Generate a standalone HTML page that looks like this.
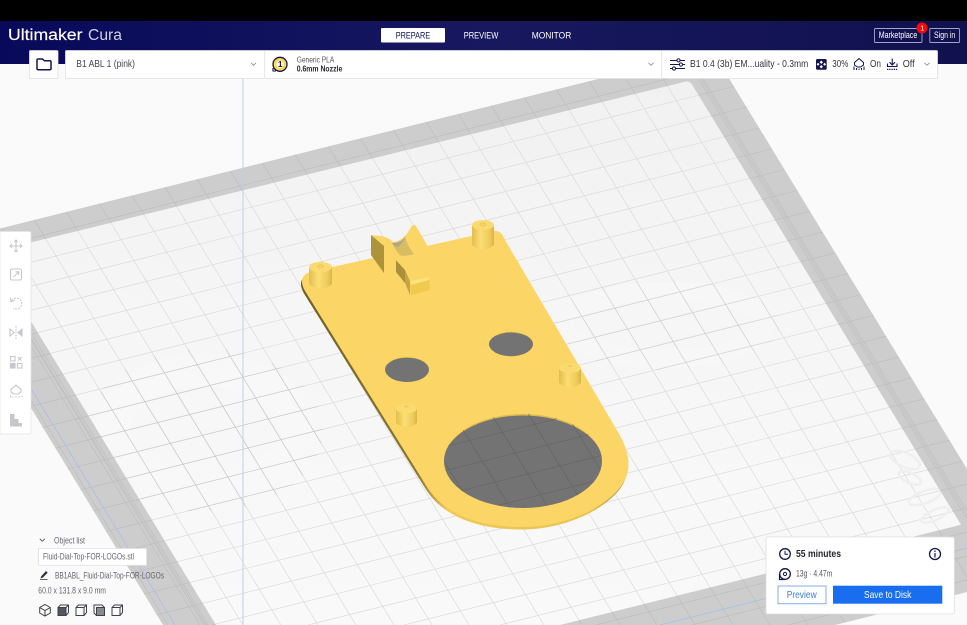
<!DOCTYPE html>
<html lang="en">
<head>
<meta charset="utf-8">
<title>Ultimaker Cura</title>
<style>
html,body{margin:0;padding:0;background:#fafafa;width:967px;height:625px;overflow:hidden}
svg{display:block;filter:blur(.25px)}
text{font-family:"Liberation Sans",sans-serif}
</style>
</head>
<body>
<svg xmlns="http://www.w3.org/2000/svg" width="967" height="625" viewBox="0 0 967 625">
<defs>
<path id="grid" d="M0 246L967 4M0 270L967 28M0 294L967 52M0 318L967 76M0 342L967 100M0 366L967 124M0 390L967 148M0 414L967 172M0 438L967 196M0 462L967 220M0 486L967 244M0 510L967 268M0 534L967 292M0 558L967 316M0 582L967 340M0 606L967 364M20 625L967 388M116 625L967 412M212 625L967 436M308 625L967 460M404 625L967 484M500 625L967 508M596 625L967 532M692 625L967 556M788 625L967 580M0 349L168 625M0 287L206 625M0 226L243 625M0 164L281 625M0 103L318 625M0 41L356 625M13 0L394 625M51 0L432 625M88 0L469 625M126 0L507 625M163 0L544 625M201 0L582 625M239 0L620 625M276 0L657 625M314 0L695 625M352 0L733 625M389 0L770 625M427 0L808 625M465 0L846 625M502 0L883 625M540 0L921 625M578 0L959 625M615 0L967 577M653 0L967 515M691 0L967 452"/>
<clipPath id="outer"><path d="M0 228.500L712 50.500L967 469V592L835 625H163L0 357Z"/></clipPath>
<clipPath id="inner"><path d="M0 250L686 81.500Q690 81 692 84.500L961 524.700L560 625H216L0 270.500Z"/></clipPath>
<clipPath id="ghostL"><ellipse cx="205" cy="430" rx="118" ry="82"/></clipPath>
<clipPath id="ghostR"><ellipse cx="665" cy="325" rx="115" ry="45"/></clipPath>
<clipPath id="holeB"><ellipse cx="523" cy="461" rx="79" ry="47"/></clipPath>
<clipPath id="holeM"><ellipse cx="407" cy="369.500" rx="22" ry="12.500"/></clipPath>
<clipPath id="holeN"><ellipse cx="511" cy="344" rx="22" ry="12.200"/></clipPath>
<linearGradient id="bedfill" x1="0" y1="0" x2="0" y2="1">
<stop offset="0" stop-color="#f1f1f1"/><stop offset=".45" stop-color="#f6f6f6"/><stop offset="1" stop-color="#f9f9f9"/>
</linearGradient>
<linearGradient id="head" x1="0" y1="0" x2="1" y2="0">
<stop offset="0" stop-color="#08095a"/><stop offset=".5" stop-color="#17185f"/><stop offset="1" stop-color="#11114f"/>
</linearGradient>
<linearGradient id="side" x1="300" y1="0" x2="630" y2="0" gradientUnits="userSpaceOnUse">
<stop offset="0" stop-color="#6d5f26"/><stop offset=".36" stop-color="#8b7730"/><stop offset=".45" stop-color="#efca5b"/><stop offset=".88" stop-color="#e8c352"/><stop offset="1" stop-color="#a98f39"/>
</linearGradient>
<linearGradient id="cyl" x1="0" y1="0" x2="1" y2="0">
<stop offset="0" stop-color="#e2be4e"/><stop offset=".4" stop-color="#fbde74"/><stop offset=".8" stop-color="#efcb5a"/><stop offset="1" stop-color="#d8b548"/>
</linearGradient>
</defs>

<!-- viewport -->
<rect width="967" height="625" fill="#fafafa"/>

<!-- build plate -->
<path d="M0 228.500L712 50.500L967 469V592L835 625H163L0 357Z" fill="#cdcdcd"/>
<g clip-path="url(#outer)">
<use href="#grid" fill="none" stroke="#bebebe" stroke-width=".7"/>
<path d="M7 300L204 625M11 300L208 625M3 300L200 625M693 70L967 519M698 70L967 511" fill="none" stroke="#bcbcbc" stroke-width=".6"/>
<path d="M30 387L175 625M660 625L967 548" fill="none" stroke="#a9bfe4" stroke-width=".8"/>
</g>
<path d="M0 250L686 81.500Q690 81 692 84.500L961 524.700L560 625H216L0 270.500Z" fill="url(#bedfill)"/>
<g clip-path="url(#inner)">
<use href="#grid" fill="none" stroke="#dbdbdb" stroke-width=".7"/>
<ellipse cx="205" cy="430" rx="92" ry="60" fill="none" stroke="#f9f9f9" stroke-width="34" opacity=".45"/>
<ellipse cx="665" cy="325" rx="100" ry="34" fill="none" stroke="#f9f9f9" stroke-width="18" opacity=".4"/>
<g clip-path="url(#ghostL)"><use href="#grid" fill="none" stroke="#c8c8c8" stroke-width=".7"/></g>
<g clip-path="url(#ghostR)"><use href="#grid" fill="none" stroke="#d2d2d2" stroke-width=".7"/></g>
<g fill="none" stroke="#efefef" stroke-width="2.500">
<ellipse cx="905" cy="460" rx="16" ry="7" transform="rotate(25 905 460)"/>
<ellipse cx="910" cy="478" rx="12" ry="5" transform="rotate(25 910 478)"/>
<ellipse cx="925" cy="497" rx="17" ry="6" transform="rotate(-20 925 497)"/>
<ellipse cx="935" cy="515" rx="15" ry="5" transform="rotate(-25 935 515)"/>
</g>
</g>
<path d="M243 79V625" stroke="#bcd0ef" stroke-width="1"/>

<!-- model -->
<path transform="translate(-1 2.500)" d="M310 272L494 231Q501 230 505 240L618 432C632 456 632 474 618 490C595 515 555 527 523 527C480 527 445 515 427 487L305 291C300 282 301 275 310 272Z" fill="url(#side)"/>
<path d="M310 272L494 231Q501 230 505 240L618 432C632 456 632 474 618 490C595 515 555 527 523 527C480 527 445 515 427 487L305 291C300 282 301 275 310 272Z" fill="#fbd566"/>
<ellipse cx="523" cy="461" rx="79" ry="47" fill="#e0bb4c"/>
<g clip-path="url(#holeB)"><ellipse cx="523" cy="463" rx="80" ry="47.500" fill="#737373"/><use href="#grid" fill="none" stroke="#666666" stroke-width=".8"/></g>
<ellipse cx="407" cy="369.500" rx="22" ry="12.500" fill="#e0bb4c"/>
<g clip-path="url(#holeM)"><ellipse cx="407" cy="370.500" rx="22.500" ry="12.800" fill="#737373"/></g>
<ellipse cx="511" cy="344" rx="22" ry="12.200" fill="#e0bb4c"/>
<g clip-path="url(#holeN)"><ellipse cx="511" cy="345" rx="22.500" ry="12.500" fill="#737373"/></g>

<!-- posts -->
<g>
<path d="M309 267V284Q320.500 294 332 284V267Z" fill="url(#cyl)"/><ellipse cx="320.500" cy="267" rx="11.500" ry="5.200" fill="#fbdb70"/><ellipse cx="320.500" cy="266.500" rx="3.200" ry="1.600" fill="#f4d468" stroke="#dcbb55" stroke-width=".5"/>
<path d="M472 225V245Q483 254 494 245V225Z" fill="url(#cyl)"/><ellipse cx="483" cy="225" rx="11" ry="5" fill="#fbdb70"/><ellipse cx="483" cy="224.500" rx="3.200" ry="1.600" fill="#f4d468" stroke="#dcbb55" stroke-width=".5"/>
<path d="M559 369V383Q570 392 581 383V369Z" fill="url(#cyl)"/><ellipse cx="570" cy="368" rx="11" ry="4.800" fill="#fbdb70"/><ellipse cx="570" cy="366" rx="2.500" ry="1.200" fill="#efcf62"/>
<path d="M396 409V423Q406.500 432 417 423V409Z" fill="url(#cyl)"/><ellipse cx="406.500" cy="408.500" rx="10.500" ry="4.800" fill="#fbdb70"/><ellipse cx="406.500" cy="406.500" rx="2.500" ry="1.200" fill="#efcf62"/>
</g>

<!-- clip feature -->
<path d="M371 235L381 236Q390 238 393 242Q403 241 410 229Q413 223 416 226L427 245V264L397 260L384 273V246Z" fill="#fbd566"/>
<path d="M371 235L384 246V273L371 255Z" fill="#ad9339"/>
<path d="M392 243Q402 243 405 236Q407 246 414 254Q403 257 400 255Q395 250 392 243Z" fill="#d6bd62"/>
<path d="M392 243Q402 243 405 236Q404 242 398 247Q394 246 392 243Z" fill="#aaa68f"/>
<path d="M396 260L405 270V283L396 272Z" fill="#a98f38"/>
<path d="M396 260L418 258L427 267L430 277L410 281L405 270Z" fill="#fbd566"/>
<path d="M405 270L410 281V295L405 283Z" fill="#c7a541"/>
<path d="M410 281L429 277L430 290L411 295Z" fill="#f0c94f"/>
<path d="M410 281L429 277V280L411 285Z" fill="#ffe27a"/>

<!-- title bar -->
<rect width="967" height="21" fill="#000"/>
<rect y="21" width="967" height="43" fill="url(#head)"/>
<text x="8" y="40" font-size="15.500" fill="#fff" stroke="#fff" stroke-width=".15" textLength="74.500" lengthAdjust="spacingAndGlyphs">Ultimaker</text>
<text x="88" y="40" font-size="15.500" fill="#cfd1e4" textLength="34" lengthAdjust="spacingAndGlyphs">Cura</text>
<rect x="381" y="28" width="64" height="14.500" rx="1" fill="#fff"/>
<text x="395.700" y="38.500" font-size="9.500" fill="#0f1154" textLength="34.500" lengthAdjust="spacingAndGlyphs">PREPARE</text>
<text x="463.700" y="38.500" font-size="9.500" fill="#fff" textLength="34.600" lengthAdjust="spacingAndGlyphs">PREVIEW</text>
<text x="531.700" y="38.500" font-size="9.500" fill="#fff" textLength="39.600" lengthAdjust="spacingAndGlyphs">MONITOR</text>
<rect x="874.500" y="28.500" width="47.500" height="14" rx="1" fill="none" stroke="#a3a5c6" stroke-width=".9"/>
<text x="878.700" y="38" font-size="9" fill="#fff" textLength="38.600" lengthAdjust="spacingAndGlyphs">Marketplace</text>
<rect x="929.800" y="28.500" width="29.700" height="14" rx="1" fill="none" stroke="#a3a5c6" stroke-width=".9"/>
<text x="934" y="38" font-size="9" fill="#fff" textLength="21.300" lengthAdjust="spacingAndGlyphs">Sign in</text>
<circle cx="922" cy="28" r="5.500" fill="#f50a0a"/>
<text x="920.300" y="30.500" font-size="7" fill="#fff">1</text>

<!-- folder button -->
<rect x="29.500" y="50.500" width="28.500" height="28" rx="1" fill="#fff" stroke="#dfe0e4" stroke-width=".8"/>
<path d="M37 60V68.500Q37 69.800 38.200 69.800H49.800Q51 69.800 51 68.500V62Q51 60.800 49.800 60.800H44.500L42.500 59H38.200Q37 59 37 60Z" fill="#fff" stroke="#14154f" stroke-width="1.500"/>

<!-- machine/material/settings bar -->
<rect x="65.500" y="50.500" width="872" height="28" rx="1" fill="#fff" stroke="#dfe0e4" stroke-width=".8"/>
<path d="M264.700 51V78M661.700 51V78" stroke="#e1e2e5" stroke-width=".8"/>
<text x="76.300" y="67.200" font-size="10.500" fill="#44454f" textLength="58.700" lengthAdjust="spacingAndGlyphs">B1 ABL 1 (pink)</text>
<path d="M251 62.800L253.500 65.300L256 62.800M648.500 62.800L651 65.300L653.500 62.800M924.500 62.800L927 65.300L929.500 62.800" fill="none" stroke="#8b8c94" stroke-width=".8"/>
<circle cx="280" cy="64.300" r="7" fill="#fcd94f" stroke="#14154f" stroke-width="1.300"/>
<circle cx="280" cy="64.300" r="3.800" fill="#fff8d8"/>
<path d="M273 68V71H276" fill="none" stroke="#14154f" stroke-width="1.100"/>
<text x="278" y="67.200" font-size="8" font-weight="bold" fill="#14154f">1</text>
<text x="296.700" y="62.400" font-size="8.500" fill="#55565e" textLength="37.600" lengthAdjust="spacingAndGlyphs">Generic PLA</text>
<text x="296.700" y="71.700" font-size="8.500" font-weight="bold" fill="#26272e" textLength="45.600" lengthAdjust="spacingAndGlyphs">0.6mm Nozzle</text>

<path d="M670 60.500H685M670 64.500H685M670 68.500H685" stroke="#14154f" stroke-width="1.100"/>
<circle cx="678.500" cy="60.300" r="1.600" fill="#fff" stroke="#14154f"/><circle cx="681" cy="64.500" r="1.600" fill="#fff" stroke="#14154f"/><circle cx="674" cy="68.500" r="1.600" fill="#fff" stroke="#14154f"/>
<text x="690" y="67.200" font-size="10.500" fill="#33343c" textLength="118.300" lengthAdjust="spacingAndGlyphs">B1 0.4 (3b) EM...uality - 0.3mm</text>

<rect x="816" y="59" width="10.700" height="10.700" rx="1.500" fill="#14154f"/>
<path d="M821.300 60.500L823 62.200L821.300 63.900L819.600 62.200ZM821.300 65L823 66.700L821.300 68.400L819.600 66.700ZM818 62.800L819.500 64.300L818 65.800L816.600 64.300ZM824.600 62.800L826.100 64.300L824.600 65.800L823.100 64.300Z" fill="#fff"/>
<text x="832.300" y="67.200" font-size="10.500" fill="#33343c" textLength="16" lengthAdjust="spacingAndGlyphs">30%</text>
<path d="M859 58.500L863.500 62.500V65L860.500 67H857.500L854.500 65V62.500Z" fill="none" stroke="#14154f" stroke-width="1"/>
<path d="M854 66.500V70M856.500 68V70M859 68.500V70M861.500 68V70M864 66.500V70" stroke="#14154f" stroke-width="1"/>
<text x="870" y="67.200" font-size="10.500" fill="#33343c" textLength="11" lengthAdjust="spacingAndGlyphs">On</text>
<path d="M892.200 58.500V64.500M889.500 62.200L892.200 65L895 62.200M887.500 63.500V66.500H897V63.500" fill="none" stroke="#14154f" stroke-width="1.100"/>
<path d="M887 69.300H898" stroke="#14154f" stroke-width="1.100" stroke-dasharray="1.400 .8"/>
<text x="902.700" y="67.200" font-size="10.500" fill="#33343c" textLength="12" lengthAdjust="spacingAndGlyphs">Off</text>

<!-- left tool rail -->
<path d="M0 231.500H29Q31 231.500 31 233.500V432Q31 434 29 434H0Z" fill="#fff" stroke="#e3e3e6" stroke-width=".7"/>
<g fill="none" stroke="#c6c8cd" stroke-width="1.100">
<path d="M16 240V252M10 246H22M14.300 241.800L16 240L17.700 241.800M14.300 250.200L16 252L17.700 250.200M11.800 244.300L10 246L11.800 247.700M20.200 244.300L22 246L20.200 247.700"/>
<rect x="10.500" y="269" width="11" height="11" rx="1.500"/>
<path d="M13.500 277L18.500 272M15.500 271.800H18.700V275"/>
<path d="M11.500 301A5.500 5.500 0 1 1 13 308" stroke-dasharray="2 1.200"/>
<path d="M10.500 297.500L11 301.500L14.800 300.500"/>
<path d="M16 326V339" stroke-dasharray="1.600 1.300"/>
<path d="M10 329L14 332.500L10 336Z"/>
<path d="M22 329L18 332.500L22 336Z" fill="#c6c8cd"/>
<rect x="10.500" y="356.500" width="4.500" height="4.500"/>
<path d="M18 357L21.500 360.500M21.500 357L18 360.500"/>
<rect x="10.500" y="363.500" width="4.500" height="4.500" fill="#c6c8cd"/>
<rect x="17.500" y="363.500" width="4.500" height="4.500"/>
<path d="M16 385L21 389.500V392L18 394H14L11 392V389.500Z"/>
<path d="M10.500 395.500V397.500M13 396V397.500M16 396V397.500M19 396V397.500M21.500 396.500H23" stroke-width="1"/>
</g>
<path d="M10 414H14.500V419H18.500V423H22V426.500H10Z" fill="#c6c8cd"/>

<!-- object list -->
<path d="M39.800 538.800L42.300 541.300L44.800 538.800" fill="none" stroke="#55565e" stroke-width=".9"/>
<text x="54" y="543.700" font-size="9" fill="#6a6b72" textLength="31" lengthAdjust="spacingAndGlyphs">Object list</text>
<rect x="38.500" y="548.500" width="108" height="16.800" fill="#fff" stroke="#e2e2e4" stroke-width=".8"/>
<text x="43" y="559.300" font-size="9" fill="#66676e" textLength="91" lengthAdjust="spacingAndGlyphs">Fluid-Dial-Top-FOR-LOGOs.stl</text>
<path d="M41.500 576.500L46 571.500L47.200 572.700L42.700 577.300L41 577.800ZM40 579.500H47.500" fill="#33343c" stroke="#33343c" stroke-width=".7"/>
<text x="55" y="578.700" font-size="9" fill="#66676e" textLength="109" lengthAdjust="spacingAndGlyphs">BB1ABL_Fluid-Dial-Top-FOR-LOGOs</text>
<text x="38.300" y="593.400" font-size="9" fill="#66676e" textLength="67.700" lengthAdjust="spacingAndGlyphs">60.0 x 131.8 x 9.0 mm</text>
<g fill="none" stroke="#3f4047" stroke-width="1">
<path d="M45 604.500L50.300 607.500V613L45 616L39.700 613V607.500ZM39.700 607.500L45 610.500L50.300 607.500M45 610.500V616"/>
<path d="M58 607.500H66V615.500H58Z" fill="#55565c"/><path d="M58 607.500L60.500 605H68.500V612.500L66 615.500M66 607.500L68.500 605"/>
<path d="M76 607.500H84V615.500H76ZM76 607.500L78.500 605H86.500V612.500L84 615.500M84 607.500L86.500 605"/>
<path d="M94 605H102L104.500 607.500V615.500H96.500L94 613Z"/><path d="M96.500 607.500H104.500V615.500H96.500Z" fill="#8a8b90"/>
<path d="M112 607.500H120V615.500H112ZM112 607.500L114.500 605H122.500V612.500L120 615.500M120 607.500L122.500 605"/>
</g>

<!-- print panel -->
<rect x="766" y="537" width="188.300" height="77" rx="2" fill="#fff" stroke="#dedfe2" stroke-width=".8"/>
<circle cx="785" cy="554" r="5.300" fill="none" stroke="#14154f" stroke-width="1.300"/>
<path d="M785 550.800V554.300H788" fill="none" stroke="#14154f" stroke-width="1"/>
<text x="796" y="557.200" font-size="10.500" font-weight="bold" fill="#26272e" textLength="45" lengthAdjust="spacingAndGlyphs">55 minutes</text>
<circle cx="935" cy="554" r="5.500" fill="none" stroke="#14154f" stroke-width="1.300"/>
<path d="M935 553V557.500M935 550.500V552" stroke="#14154f" stroke-width="1.200"/>
<circle cx="785" cy="574" r="5.300" fill="none" stroke="#14154f" stroke-width="1.300"/>
<circle cx="785" cy="574" r="1.600" fill="none" stroke="#14154f" stroke-width="1"/>
<path d="M779.500 574V579.500H785" fill="none" stroke="#14154f" stroke-width="1.200"/>
<text x="796" y="576.500" font-size="9" fill="#55565e" textLength="36.300" lengthAdjust="spacingAndGlyphs">13g · 4.47m</text>
<rect x="778" y="586" width="48" height="17.700" fill="#fff" stroke="#85aeea" stroke-width="1"/>
<text x="786.700" y="598.200" font-size="10.500" fill="#3b7fe0" textLength="30" lengthAdjust="spacingAndGlyphs">Preview</text>
<rect x="833" y="585.700" width="109.300" height="18" fill="#196ef0"/>
<text x="864" y="598.200" font-size="10.500" fill="#fff" textLength="47.300" lengthAdjust="spacingAndGlyphs">Save to Disk</text>
</svg>
</body>
</html>
